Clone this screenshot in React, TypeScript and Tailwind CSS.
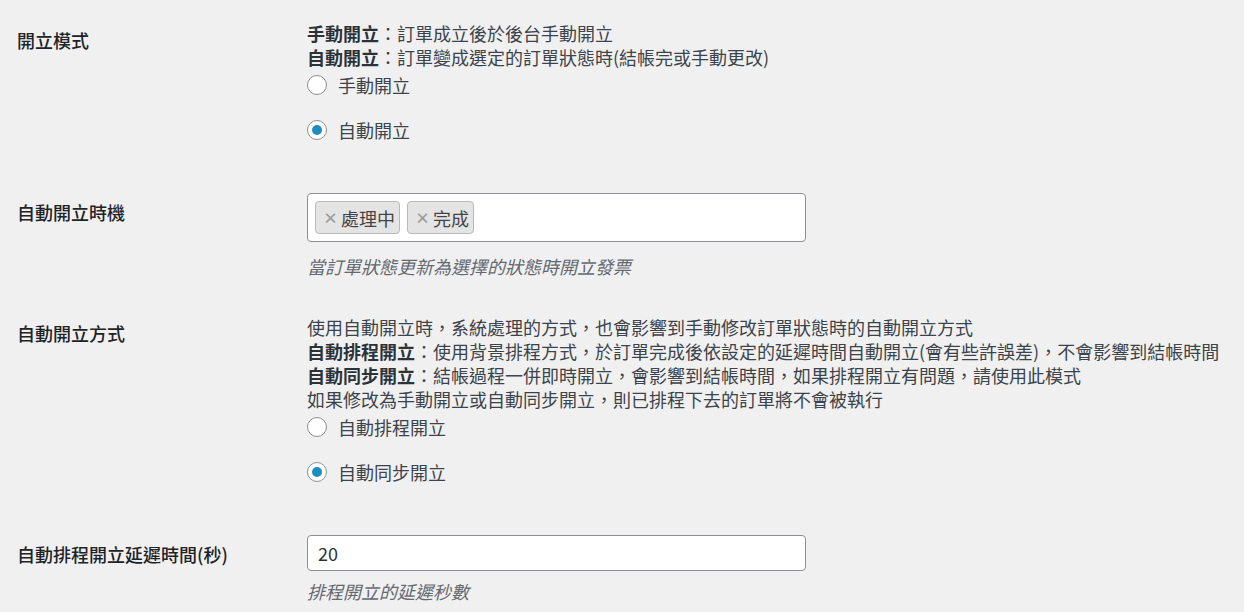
import { useState } from "react"

type RadioProps = {
  label: string
  checked: boolean
  onSelect: () => void
  className?: string
}

function Radio({ label, checked, onSelect, className = "" }: RadioProps) {
  return (
    <label className={`flex h-[24px] cursor-pointer items-center ${className}`} onClick={onSelect}>
      <span className="flex h-5 w-5 items-center justify-center rounded-full border border-[#8c8f94] bg-white">
        {checked && <span className="h-[10px] w-[10px] rounded-full bg-[#1e8cbe]" />}
      </span>
      <span className="ml-[11px]">{label}</span>
    </label>
  )
}

function Tag({ text }: { text: string }) {
  return (
    <span className="flex h-[33px] items-center rounded-[4px] border border-[#b9b9b9] bg-[#e4e4e4] pl-[7px] pr-[4px] text-[#444]">
      <span className="mr-[3px] text-[15px] font-bold text-[#999]">×</span>
      {text}
    </span>
  )
}

export default function App() {
  const [mode, setMode] = useState("auto")
  const [method, setMethod] = useState("sync")
  const [delay, setDelay] = useState("20")

  return (
    <div className="min-h-[612px] bg-[#f0f0f1] font-['Noto_Sans_CJK_TC','Noto_Sans',sans-serif] text-[18px] leading-[24px] text-[#3c434a]">
      {/* 開立模式 */}
      <div className="flex pt-[21px]">
        <div className="mt-[7px] w-[307px] pl-[17px] font-medium text-[#1d2327]">開立模式</div>
        <div className="flex-1">
          <p>
            <b className="font-bold text-[#2c3338]">手動開立</b>：訂單成立後於後台手動開立
          </p>
          <p>
            <b className="font-bold text-[#2c3338]">自動開立</b>：訂單變成選定的訂單狀態時(結帳完或手動更改)
          </p>
          <Radio className="mt-[4px]" label="手動開立" checked={mode === "manual"} onSelect={() => setMode("manual")} />
          <Radio className="mt-[21px]" label="自動開立" checked={mode === "auto"} onSelect={() => setMode("auto")} />
        </div>
      </div>

      {/* 自動開立時機 */}
      <div className="flex pt-[51px]">
        <div className="mt-[7px] w-[307px] pl-[17px] font-medium text-[#1d2327]">自動開立時機</div>
        <div className="flex-1">
          <div className="flex h-[49px] w-[499px] items-center gap-[7px] rounded-[4px] border border-[#8c8f94] bg-white pl-[7px]">
            <Tag text="處理中" />
            <Tag text="完成" />
          </div>
          <p className="mt-[12px] italic text-[#646970]">當訂單狀態更新為選擇的狀態時開立發票</p>
        </div>
      </div>

      {/* 自動開立方式 */}
      <div className="flex pt-[37px]">
        <div className="mt-[6px] w-[307px] pl-[17px] font-medium text-[#1d2327]">自動開立方式</div>
        <div className="flex-1">
          <p>使用自動開立時，系統處理的方式，也會影響到手動修改訂單狀態時的自動開立方式</p>
          <p>
            <b className="font-bold text-[#2c3338]">自動排程開立</b>：使用背景排程方式，於訂單完成後依設定的延遲時間自動開立(會有些許誤差)，不會影響到結帳時間
          </p>
          <p>
            <b className="font-bold text-[#2c3338]">自動同步開立</b>：結帳過程一併即時開立，會影響到結帳時間，如果排程開立有問題，請使用此模式
          </p>
          <p>如果修改為手動開立或自動同步開立，則已排程下去的訂單將不會被執行</p>
          <Radio className="mt-[4px]" label="自動排程開立" checked={method === "schedule"} onSelect={() => setMethod("schedule")} />
          <Radio className="mt-[21px]" label="自動同步開立" checked={method === "sync"} onSelect={() => setMethod("sync")} />
        </div>
      </div>

      {/* 延遲時間 */}
      <div className="flex pt-[51px]">
        <div className="mt-[7px] w-[307px] pl-[17px] font-medium text-[#1d2327]">自動排程開立延遲時間(秒)</div>
        <div className="flex-1">
          <input
            type="text"
            value={delay}
            onChange={(e) => setDelay(e.target.value)}
            className="block h-[36px] w-[499px] rounded-[4px] border border-[#8c8f94] bg-white px-[10px] text-[#2c3338] outline-none"
          />
          <p className="mt-[8px] italic text-[#646970]">排程開立的延遲秒數</p>
        </div>
      </div>
    </div>
  )
}
